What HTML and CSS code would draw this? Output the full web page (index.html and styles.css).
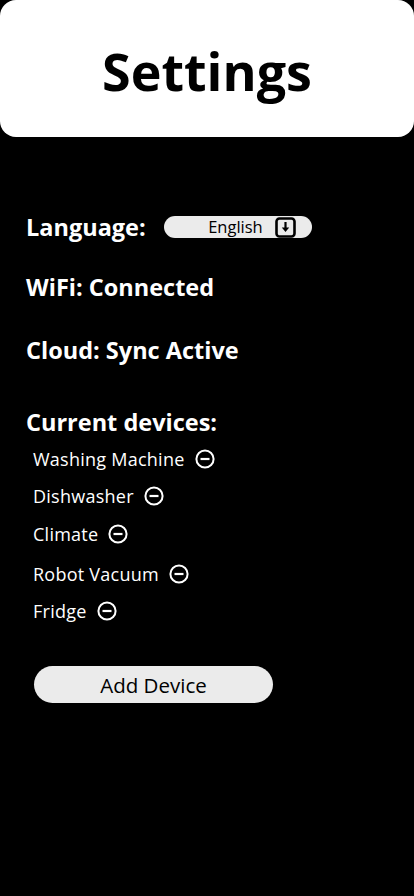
FILE: index.html
```html
<!DOCTYPE html>
<html>
<head>
<meta charset="utf-8">
<link rel="stylesheet" href="styles.css">
</head>
<body>
<header class="header"><h1 class="title">Settings</h1></header>
<main class="content">
  <div class="row lang-row">
    <span class="label">Language:</span>
    <div class="select">
      <span class="select-text">English</span>
      <svg class="select-icon" width="21" height="21" viewBox="0 0 21 21"><rect x="1.5" y="1.5" width="18" height="18" rx="3" fill="none" stroke="#000" stroke-width="2.6"/><path d="M10.5 5v7.5" stroke="#000" stroke-width="2.2"/><path d="M6.8 10.5L10.5 15L14.2 10.5Z" fill="#000"/></svg>
    </div>
  </div>
  <div class="row wifi-row"><span class="label">WiFi: Connected</span></div>
  <div class="row cloud-row"><span class="label">Cloud: Sync Active</span></div>
  <div class="row devices-row"><span class="label">Current devices:</span></div>
  <ul class="devices">
    <li class="device"><span>Washing Machine</span><svg class="minus" width="20" height="20" viewBox="0 0 20 20"><circle cx="10" cy="10" r="8.6" fill="none" stroke="#fff" stroke-width="2"/><path d="M5.5 10h9" stroke="#fff" stroke-width="2.2"/></svg></li>
    <li class="device"><span>Dishwasher</span><svg class="minus" width="20" height="20" viewBox="0 0 20 20"><circle cx="10" cy="10" r="8.6" fill="none" stroke="#fff" stroke-width="2"/><path d="M5.5 10h9" stroke="#fff" stroke-width="2.2"/></svg></li>
    <li class="device"><span>Climate</span><svg class="minus" width="20" height="20" viewBox="0 0 20 20"><circle cx="10" cy="10" r="8.6" fill="none" stroke="#fff" stroke-width="2"/><path d="M5.5 10h9" stroke="#fff" stroke-width="2.2"/></svg></li>
    <li class="device tall"><span>Robot Vacuum</span><svg class="minus" width="20" height="20" viewBox="0 0 20 20"><circle cx="10" cy="10" r="8.6" fill="none" stroke="#fff" stroke-width="2"/><path d="M5.5 10h9" stroke="#fff" stroke-width="2.2"/></svg></li>
    <li class="device"><span>Fridge</span><svg class="minus" width="20" height="20" viewBox="0 0 20 20"><circle cx="10" cy="10" r="8.6" fill="none" stroke="#fff" stroke-width="2"/><path d="M5.5 10h9" stroke="#fff" stroke-width="2.2"/></svg></li>
  </ul>
  <button class="add-btn">Add Device</button>
</main>
</body>
</html>
```
FILE: styles.css
```css
* { box-sizing: border-box; }
html, body {
  margin: 0;
  padding: 0;
  background: #000;
  width: 414px;
  height: 896px;
  font-family: "Open Sans", "Noto Sans", sans-serif;
  color: #fff;
  overflow: hidden;
}
.header {
  height: 137px;
  background: #fff;
  border-radius: 16px;
  display: flex;
  align-items: center;
  justify-content: center;
}
.title {
  margin: 0;
  color: #000;
  font-size: 52px;
  font-weight: 700;
  line-height: 1;
  padding-top: 4px;
}
.content {
  padding-left: 26px;
  display: flex;
  flex-direction: column;
}
.row {
  display: flex;
  align-items: center;
  height: 26px;
}
.label {
  font-size: 23.5px;
  font-weight: 700;
  line-height: 26px;
  white-space: nowrap;
}
.lang-row { margin-top: 77px; }
.wifi-row { margin-top: 34px; }
.cloud-row { margin-top: 37px; }
.devices-row { margin-top: 46px; }
.select {
  margin-left: 18px;
  width: 148px;
  height: 22px;
  border-radius: 11px;
  background: #ebebeb;
  display: flex;
  align-items: center;
  justify-content: flex-end;
  padding-right: 16px;
  color: #000;
}
.select-text {
  font-size: 16.5px;
  line-height: 22px;
  margin-right: 12px;
}
.select-icon { display: block; }
.devices {
  list-style: none;
  margin: 5px 0 0 0;
  padding: 0 0 0 7px;
  display: flex;
  flex-direction: column;
}
.device {
  display: flex;
  align-items: center;
  gap: 10px;
  height: 37.5px;
  font-size: 18px;
  line-height: 24px;
  letter-spacing: 0.25px;
}
.device.tall { height: 40px; padding-top: 3px; }
.minus { display: block; flex: none; }
.add-btn {
  margin-top: 36px;
  margin-left: 8px;
  width: 239px;
  height: 37px;
  border: none;
  border-radius: 18.5px;
  background: #ebebeb;
  color: #000;
  font-family: "Open Sans", "Noto Sans", sans-serif;
  font-size: 20.5px;
  padding: 0;
}
```
